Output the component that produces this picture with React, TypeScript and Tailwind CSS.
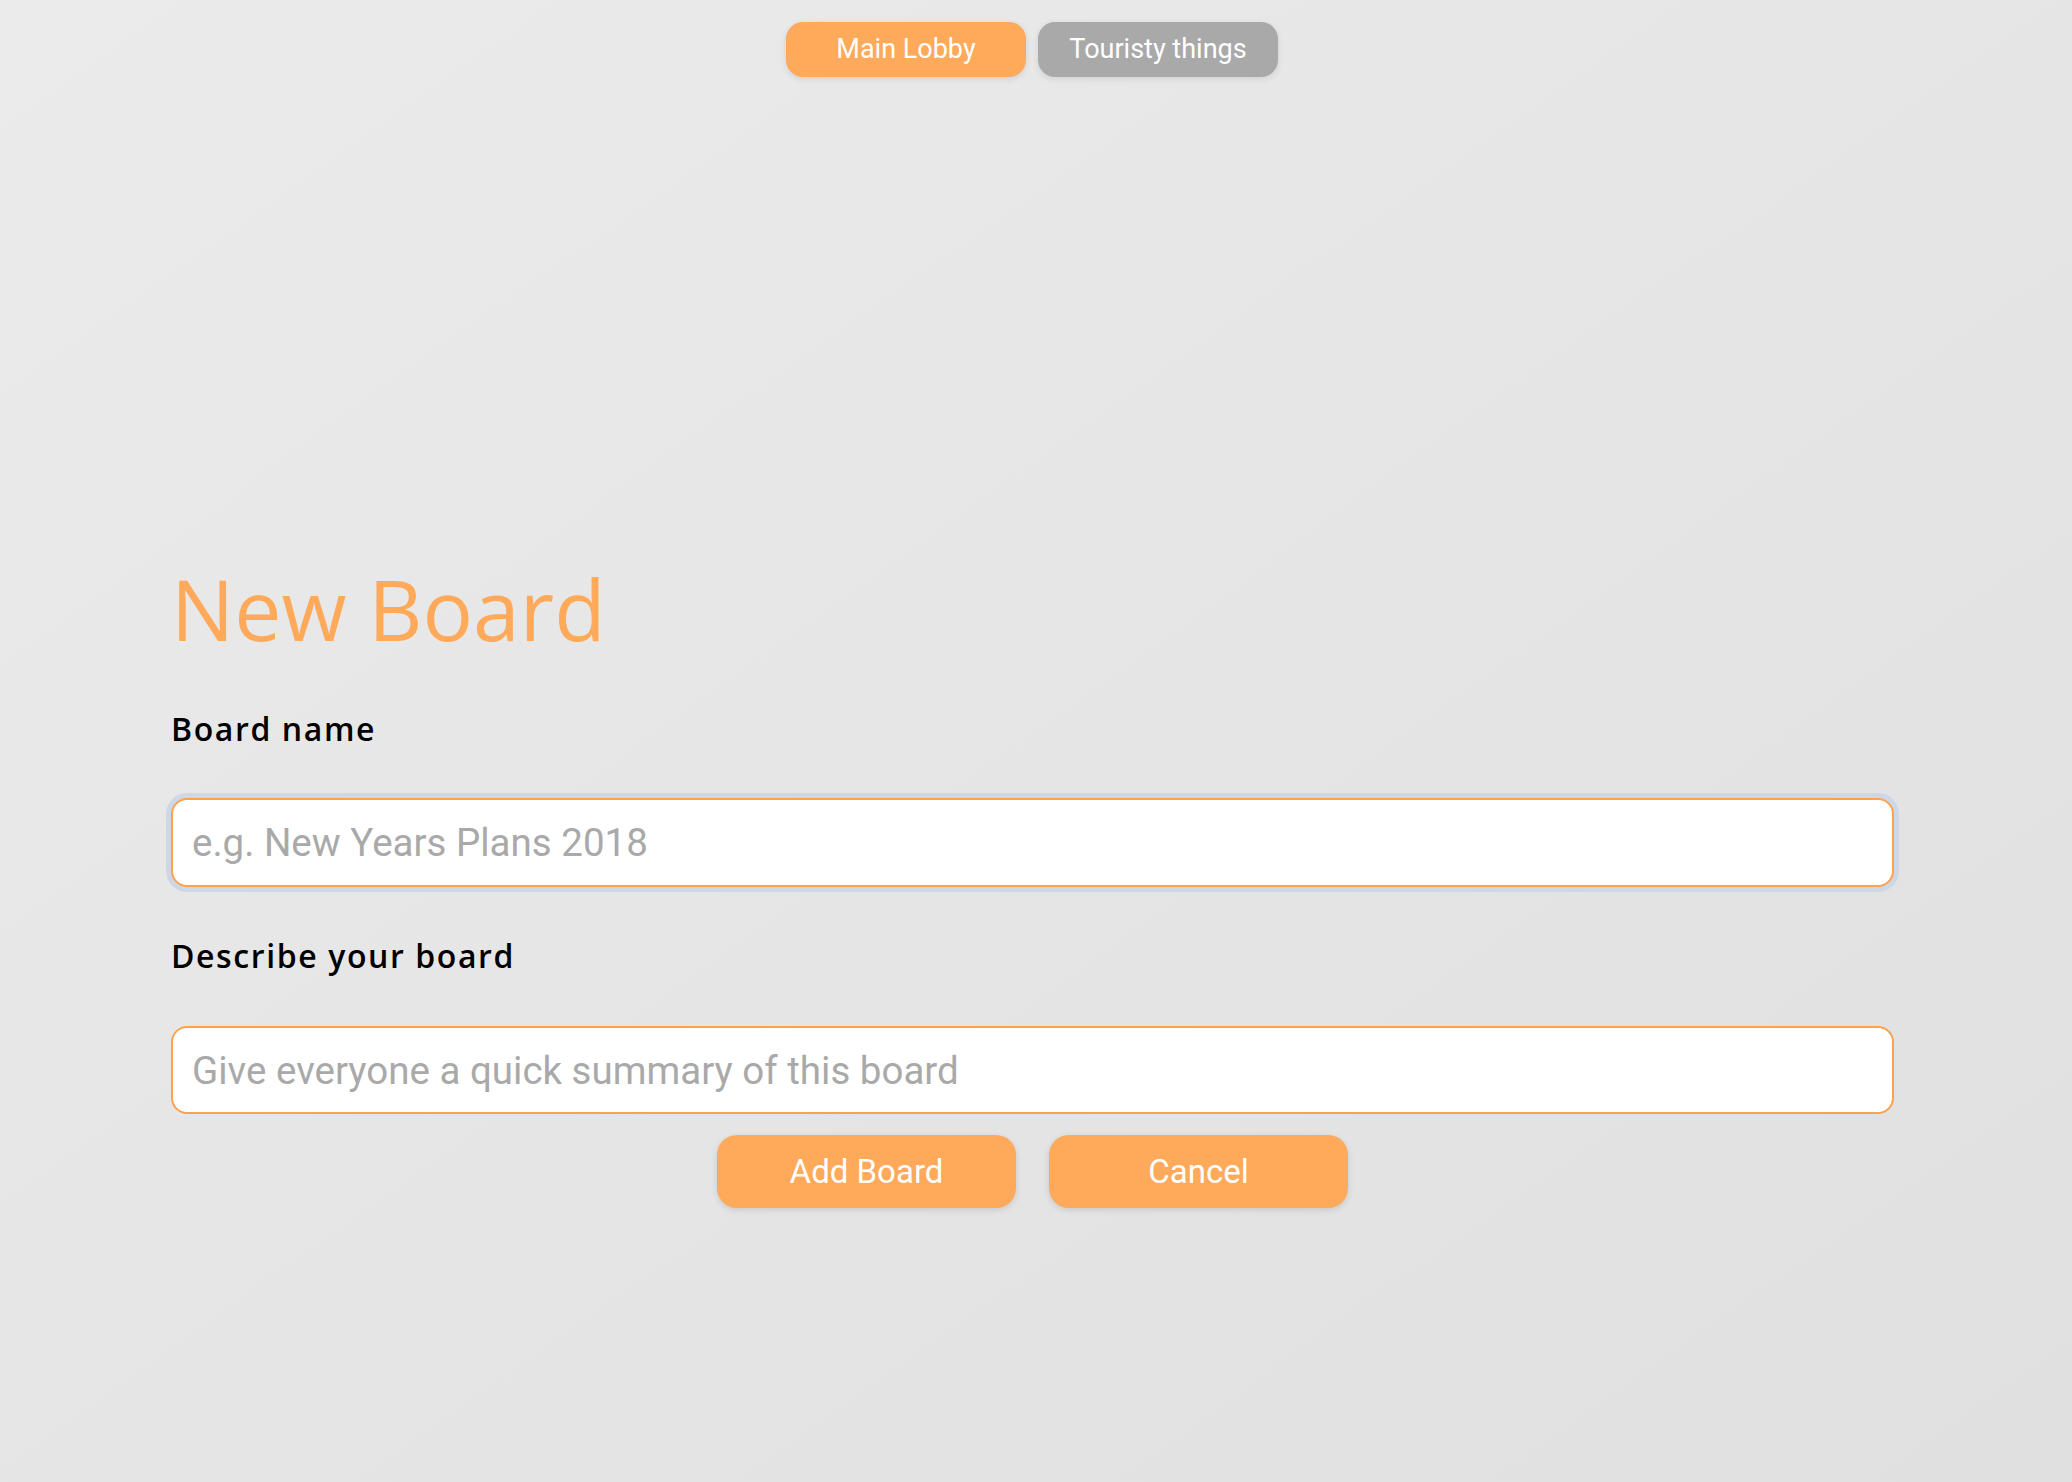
import React from 'react';

const tabs = [
  { label: 'Main Lobby', active: true },
  { label: 'Touristy things', active: false },
];

const Label: React.FC<{ children: React.ReactNode }> = ({ children }) => (
  <label className="block font-['Open_Sans',sans-serif] text-[32px] font-semibold leading-none tracking-[1.6px] text-black">
    {children}
  </label>
);

const ActionButton: React.FC<{ children: React.ReactNode }> = ({ children }) => (
  <button className="h-[73px] w-[299px] rounded-[20px] bg-[#ffa95b] font-['Roboto',sans-serif] text-[33px] text-white shadow-[0_2px_6px_rgba(0,0,0,0.12)]">
    {children}
  </button>
);

export default function App() {
  return (
    <div className="min-h-[1482px] w-full bg-gradient-to-br from-[#ebebeb] to-[#e0e0e0]">
      <nav className="flex justify-center gap-[12px] pt-[22px] pr-[8px]">
        {tabs.map((t) => (
          <button
            key={t.label}
            className={`h-[55px] w-[240px] rounded-[17px] font-['Roboto',sans-serif] text-[27px] text-white shadow-[0_2px_6px_rgba(0,0,0,0.1)] ${
              t.active ? 'bg-[#ffa95b]' : 'bg-[#a9a9a9]'
            }`}
          >
            {t.label}
          </button>
        ))}
      </nav>

      <main className="ml-[171px] w-[1723px] pt-[490px]">
        <h1 className="font-['Open_Sans',sans-serif] text-[84px] font-normal leading-none text-[#ffa95b]">
          New Board
        </h1>

        <div className="mt-[62px]">
          <Label>Board name</Label>
          <input
            placeholder="e.g. New Years Plans 2018"
            className="mt-[53px] block h-[89px] w-full rounded-[16px] border-2 border-[#ffa24c] bg-white px-[19px] font-['Roboto',sans-serif] text-[38.5px] text-black shadow-[0_0_0_5px_#cdd7e8] outline-none placeholder:text-[#a9a9a9]"
          />
        </div>

        <div className="mt-[53px]">
          <Label>Describe your board</Label>
          <input
            placeholder="Give everyone a quick summary of this board"
            className="mt-[54px] block h-[88px] w-full rounded-[16px] border-2 border-[#ffa24c] bg-white px-[19px] font-['Roboto',sans-serif] text-[38.5px] text-black outline-none placeholder:text-[#a9a9a9]"
          />
        </div>

        <div className="mt-[21px] flex justify-center gap-[33px]">
          <ActionButton>Add Board</ActionButton>
          <ActionButton>Cancel</ActionButton>
        </div>
      </main>
    </div>
  );
}
